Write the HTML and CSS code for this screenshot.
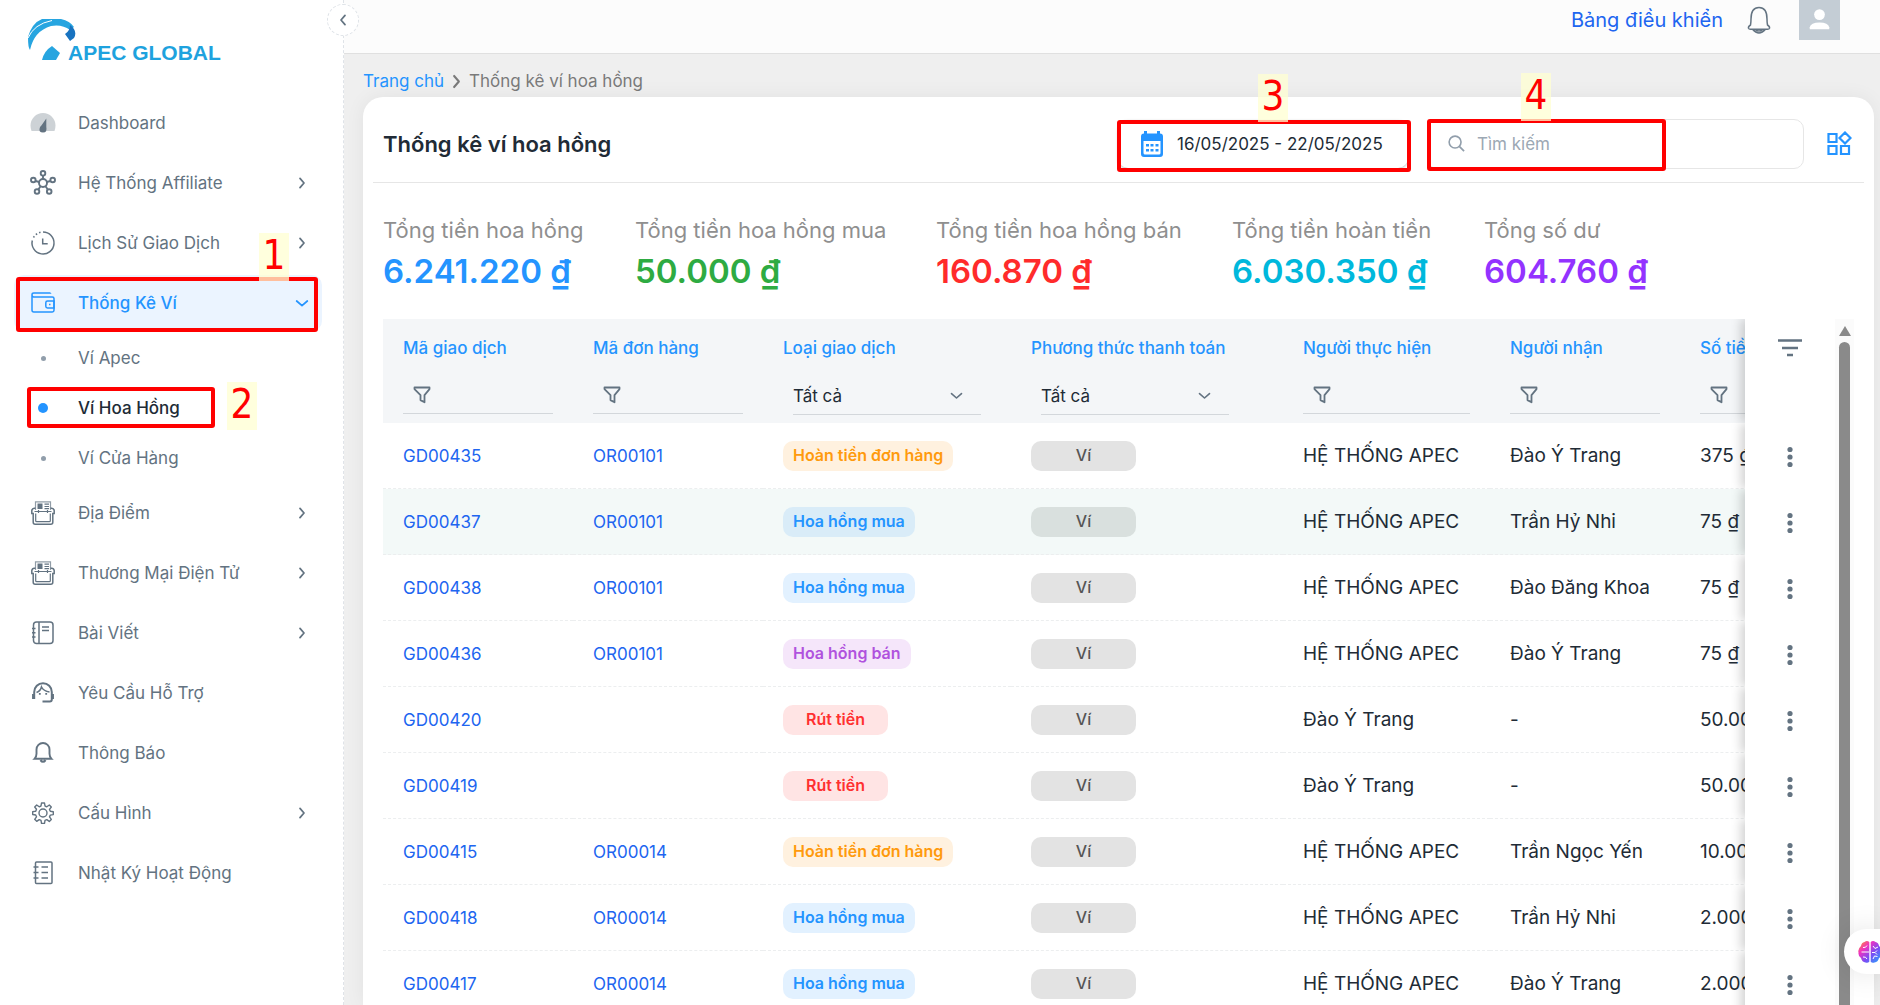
FILE: index.html
```html
<!DOCTYPE html>
<html lang="vi">
<head>
<meta charset="utf-8">
<meta name="viewport" content="width=device-width, initial-scale=1">
<title>Thống kê ví hoa hồng</title>
<link rel="stylesheet" href="styles.css">
</head>
<body>

<!-- shared icons -->
<svg class="sprite" aria-hidden="true">
  <symbol id="i-right" viewBox="0 0 24 24"><path d="M9 5l6 7-6 7" fill="none" stroke="currentColor" stroke-width="2.6" stroke-linecap="round" stroke-linejoin="round"/></symbol>
  <symbol id="i-down" viewBox="0 0 24 24"><path d="M4 9l8 7 8-7" fill="none" stroke="currentColor" stroke-width="2.6" stroke-linecap="round" stroke-linejoin="round"/></symbol>
  <symbol id="i-filter" viewBox="0 0 18 18"><path d="M1.5 1.5h15v1.6l-5 6v7.2l-4-2.2V9.100l-6-6z" fill="none" stroke="currentColor" stroke-width="1.8" stroke-linejoin="round"/></symbol>
  <symbol id="i-dots" viewBox="0 0 6 22"><circle cx="3" cy="3.500" r="2.600"/><circle cx="3" cy="11" r="2.600"/><circle cx="3" cy="18.500" r="2.600"/></symbol>
  <symbol id="i-press" viewBox="0 0 26 26">
    <path d="M5.500 10V1.800h15V10" fill="none" stroke="currentColor" stroke-width="1.200" opacity=".7"/>
    <rect x="7.500" y="3.500" width="5" height="5.500"/><path d="M14.500 4.200h4.500M14.500 6.500h4.500M14.500 8.700h4.500" stroke="currentColor" stroke-width="1.200"/>
    <path d="M5.500 8.200H4.200q-2 0-2.400 2.300v3h1.400v8.700q0 2 2 2h15.600q2 0 2-2v-8.700h1.400v-3q-.4-2.300-2.400-2.300h-1.300" fill="none" stroke="currentColor" stroke-width="1.500"/>
    <path d="M4.500 11.500h17M8.500 10v3M17.500 10v3M5.700 13.500v7.200q0 1 1 1h12.600q1 0 1-1v-7.200" fill="none" stroke="currentColor" stroke-width="1.200"/>
  </symbol>
</svg>

<div class="app">

  <aside class="sidebar">
    <a class="logo" href="#">
      <svg class="logo-mark" viewBox="0 0 48 41" aria-hidden="true">
        <path d="M2 31Q0 29 0 18 4 4 14 0h19q9 2 13 8l-4 3Q34 5 23 7 6 12 2 31z" fill="#27a5e0"/>
        <path d="M0 19Q6 5 24 1.500" fill="none" stroke="#fff" stroke-width="1"/>
        <path d="M42 6q8 6 4 13l-4 3-5-7q5-3 5-9z" fill="#1873c0"/>
        <path d="M14 41q2-9 10-14l8 7-4 7z" fill="#27a5e0"/>
      </svg>
      <span class="logo-text">APEC GLOBAL</span>
    </a>

    <nav class="nav">
      <a class="nav-item" href="#">
        <svg class="nav-icon" viewBox="0 0 26 26"><path d="M.5 15.500a12.500 12.500 0 0 1 25 0q0 3-1 5.500h-23q-1-2.500-1-5.500z" opacity=".32"/><path d="M16.300 8.500v8.500q1.200 5.500-3.300 5.500t-3.300-4.500q.2-1.500 1.700-2.500z"/></svg>
        <span>Dashboard</span>
      </a>
      <a class="nav-item" href="#">
        <svg class="nav-icon line" viewBox="0 0 26 26"><g stroke-width="1.900"><circle cx="13" cy="13" r="4"/><circle cx="13" cy="3.300" r="2.300"/><circle cx="3.300" cy="10" r="2.300"/><circle cx="22.700" cy="10" r="2.300"/><circle cx="7" cy="21.500" r="2.300"/><circle cx="19.200" cy="21.500" r="2.300"/><path d="M13 5.500V9M5.500 11l3.700 1M20.500 11l-3.700 1M8.300 19.500l2.300-3.200M17.800 19.500l-2.300-3.200"/></g></svg>
        <span>Hệ Thống Affiliate</span>
        <svg class="chev"><use href="#i-right"/></svg>
      </a>
      <a class="nav-item" href="#">
        <svg class="nav-icon line" viewBox="0 0 26 26"><path d="M13 2a11 11 0 1 1-10.700 8.500" stroke-width="1.500"/><path d="M3.500 7.500A11 11 0 0 1 11 2.200" stroke-width="1.600" stroke-dasharray="1.500 2.200"/><path d="M12.700 8.500v5.300h5" stroke-width="1.500"/></svg>
        <span>Lịch Sử Giao Dịch</span>
        <svg class="chev"><use href="#i-right"/></svg>
      </a>
      <a class="nav-item active" href="#">
        <svg class="nav-icon line" viewBox="0 0 26 26"><g stroke-width="1.500"><path d="M20.500 3H3.800Q2 3 2 4.700v15.600Q2 22 3.800 22h18.500q1.700 0 1.700-1.700V8.500Q24 7 22.300 7H3.500Q2 6.700 2 5M20.500 3v.8"/><path d="M24 11h-6.500q-1.700 0-1.700 1.700v3.600q0 1.700 1.700 1.700H24z"/><path d="M19 14.500h1.500"/></g></svg>
        <span>Thống Kê Ví</span>
        <svg class="chev"><use href="#i-down"/></svg>
        <span class="mark-box mark-box-1"></span><span class="mark-num mark-num-1">1</span>
      </a>
      <div class="subnav">
        <a class="sub-item" href="#"><i class="dot"></i><span>Ví Apec</span></a>
        <a class="sub-item current" href="#"><i class="dot"></i><span>Ví Hoa Hồng</span>
          <span class="mark-box mark-box-2"></span><span class="mark-num mark-num-2">2</span></a>
        <a class="sub-item" href="#"><i class="dot"></i><span>Ví Cửa Hàng</span></a>
      </div>
      <a class="nav-item" href="#">
        <svg class="nav-icon"><use href="#i-press"/></svg>
        <span>Địa Điểm</span>
        <svg class="chev"><use href="#i-right"/></svg>
      </a>
      <a class="nav-item" href="#">
        <svg class="nav-icon"><use href="#i-press"/></svg>
        <span>Thương Mại Điện Tử</span>
        <svg class="chev"><use href="#i-right"/></svg>
      </a>
      <a class="nav-item" href="#">
        <svg class="nav-icon line" viewBox="0 0 26 26"><g stroke-width="1.500"><rect x="3.500" y="2" width="19.500" height="21.500" rx="3"/><path d="M9 2v21.500M2 8.500h3.500M2 12.800h3.500M2 17h3.500M12 7h7M12 10.500h7"/></g></svg>
        <span>Bài Viết</span>
        <svg class="chev"><use href="#i-right"/></svg>
      </a>
      <a class="nav-item" href="#">
        <svg class="nav-icon line" viewBox="0 0 26 26"><path d="M4.200 19V12a8.800 8.800 0 0 1 17.600 0v7.500q0 2-2 2H12.500" stroke-width="2"/><path d="M3.300 14v5M22.700 14v5" stroke-width="2.500"/><path d="M6.500 12.500q4-1.500 5-5.500 2 4 8 5" stroke-width="1.600"/><path d="M9.800 13v1.800M16.200 13v1.800" stroke-width="1.800"/></svg>
        <span>Yêu Cầu Hỗ Trợ</span>
      </a>
      <a class="nav-item" href="#">
        <svg class="nav-icon line" viewBox="0 0 26 26"><path d="M4.500 18.800q2-2 2-5V9.500a6.500 6.500 0 0 1 13 0v4.300q0 3 2 5z" stroke-width="1.900"/><path d="M10.500 20q2.500 3.500 5 0" stroke-width="2.200"/></svg>
        <span>Thông Báo</span>
      </a>
      <a class="nav-item" href="#">
        <svg class="nav-icon line" viewBox="0 0 26 26"><g stroke-width="1.400"><circle cx="13" cy="13" r="4"/><path d="M11.500 3h3l.5 3 1.800.8L19.300 5 21.300 7l-1.800 2.400.8 1.900 3 .4v2.900l-3 .5-.8 1.800 1.800 2.500-2 2-2.500-1.800-1.800.8-.5 3h-3l-.5-3-1.800-.8L6.700 21.300l-2-2 1.800-2.500-.8-1.800-3-.5v-2.900l3-.4.8-1.900L4.700 7l2-2 2.500 1.800L11 6z" stroke-linejoin="round"/></g></svg>
        <span>Cấu Hình</span>
        <svg class="chev"><use href="#i-right"/></svg>
      </a>
      <a class="nav-item" href="#">
        <svg class="nav-icon line" viewBox="0 0 26 26"><g stroke-width="1.500"><rect x="5.500" y="2" width="16.500" height="21.500" rx="1"/><path d="M3.500 7h5M3.500 12.500h5M3.500 18h5M11.500 7h6.500M11.500 12.500h6.500M11.500 18h6.500"/></g></svg>
        <span>Nhật Ký Hoạt Động</span>
      </a>
    </nav>
    <button class="collapse" type="button" aria-label="Thu gọn"><svg class="flip"><use href="#i-right"/></svg></button>
  </aside>

  <main class="main">
    <header class="topbar">
      <a class="top-link" href="#">Bảng điều khiển</a>
      <button class="bell" type="button" aria-label="Thông báo">
        <svg viewBox="0 0 24 28"><path d="M3.500 19q.5-2.500.5-6Q4 1.500 12 1.500T20 13q0 3.500.5 6 2.500 1.500 2 3.300-.4 1-2 1H3.500q-1.600 0-2-1Q1 20.500 3.500 19zM5.500 23.300q6.500 7.500 13 0M8 23.500q4 3 8 0" fill="none" stroke="currentColor" stroke-width="1.500"/></svg>
      </button>
      <button class="avatar" type="button" aria-label="Tài khoản">
        <svg viewBox="0 0 42 42"><rect width="42" height="42" fill="#c4cdd5"/><circle cx="21" cy="16" r="5.500" fill="#fff"/><path d="M11 31v-2q1-5 10-5t10 5v2z" fill="#fff"/></svg>
      </button>
    </header>

    <nav class="crumbs">
      <a href="#">Trang chủ</a>
      <svg><use href="#i-right"/></svg>
      <span>Thống kê ví hoa hồng</span>
    </nav>

    <section class="card">
      <div class="card-head">
        <h1>Thống kê ví hoa hồng</h1>
        <div class="date-wrap">
          <button class="date" type="button">
            <svg viewBox="0 0 24 26"><path d="M4 0h3v2.500h10V0h3v2.500q3 0 3 3V23q0 3-3 3H4q-3 0-3-3V5.500q0-3 3-3zM3.500 10v12q0 1.500 1.500 1.500h14q1.500 0 1.500-1.500V10z" fill-rule="evenodd"/><path d="M6 13h3v2.500H6zM10.500 13h3v2.500h-3zM15.500 13h3v2.500h-3zM6 18h3v2.500H6zM10.500 18h3v2.500h-3zM15.500 18h3v2.500h-3z"/></svg>
            16/05/2025 - 22/05/2025
          </button>
          <span class="mark-box mark-box-3"></span><span class="mark-num mark-num-3">3</span>
        </div>
        <label class="search">
          <svg viewBox="0 0 18 18"><circle cx="7.500" cy="7.500" r="6.300" fill="none" stroke="currentColor" stroke-width="1.700"/><path d="M12 12l5 5" stroke="currentColor" stroke-width="1.900"/></svg>
          <input type="search" placeholder="Tìm kiếm" aria-label="Tìm kiếm">
          <span class="mark-box mark-box-4"></span><span class="mark-num mark-num-4">4</span>
        </label>
        <button class="widgets" type="button" aria-label="Tùy chỉnh">
          <svg viewBox="0 0 25 25"><path d="M1.500 3h8v8h-8zM1.500 15h8v8h-8zM14 15h8v8h-8zM18 1.500L23.500 7 18 12.500 12.500 7z" fill="none" stroke="currentColor" stroke-width="2.200"/></svg>
        </button>
      </div>

      <dl class="stats">
        <div><dt>Tổng tiền hoa hồng</dt><dd class="blue">6.241.220 ₫</dd></div>
        <div><dt>Tổng tiền hoa hồng mua</dt><dd class="green">50.000 ₫</dd></div>
        <div><dt>Tổng tiền hoa hồng bán</dt><dd class="red">160.870 ₫</dd></div>
        <div><dt>Tổng tiền hoàn tiền</dt><dd class="cyan">6.030.350 ₫</dd></div>
        <div><dt>Tổng số dư</dt><dd class="purple">604.760 ₫</dd></div>
      </dl>

      <div class="grid-area">
        <div class="table-wrap">
          <table>
            <colgroup><col class="c-code"><col class="c-code"><col class="c-type"><col class="c-pay"><col class="c-from"><col class="c-to"><col class="c-sum"><col class="c-act"></colgroup>
            <thead>
              <tr class="titles">
                <th>Mã giao dịch</th><th>Mã đơn hàng</th><th>Loại giao dịch</th><th>Phương thức thanh toán</th><th>Người thực hiện</th><th>Người nhận</th><th>Số tiền</th>
                <th class="act" rowspan="2"><button type="button" aria-label="Bộ lọc"><svg class="lines" viewBox="0 0 24 18"><path d="M0 1.500h24M4 9h16M9 16h6" stroke="currentColor" stroke-width="2.600"/></svg></button></th>
              </tr>
              <tr class="filters">
                <td><label class="filter"><svg><use href="#i-filter"/></svg><input type="text" aria-label="Lọc mã giao dịch"></label></td>
                <td><label class="filter"><svg><use href="#i-filter"/></svg><input type="text" aria-label="Lọc mã đơn hàng"></label></td>
                <td><div class="pick"><select aria-label="Loại giao dịch"><option>Tất cả</option></select><svg><use href="#i-down"/></svg></div></td>
                <td><div class="pick"><select aria-label="Phương thức thanh toán"><option>Tất cả</option></select><svg><use href="#i-down"/></svg></div></td>
                <td><label class="filter"><svg><use href="#i-filter"/></svg><input type="text" aria-label="Lọc người thực hiện"></label></td>
                <td><label class="filter"><svg><use href="#i-filter"/></svg><input type="text" aria-label="Lọc người nhận"></label></td>
                <td><label class="filter"><svg><use href="#i-filter"/></svg><input type="text" aria-label="Lọc số tiền"></label></td>
              </tr>
            </thead>
            <tbody>
              <tr><td><a href="#">GD00435</a></td><td><a href="#">OR00101</a></td><td><span class="tag refund">Hoàn tiền đơn hàng</span></td><td><span class="tag wallet">Ví</span></td><td>HỆ THỐNG APEC</td><td>Đào Ý Trang</td><td>375 ₫</td><td class="act"><button type="button" aria-label="Thao tác"><svg class="dots"><use href="#i-dots"/></svg></button></td></tr>
              <tr class="hover"><td><a href="#">GD00437</a></td><td><a href="#">OR00101</a></td><td><span class="tag buy">Hoa hồng mua</span></td><td><span class="tag wallet">Ví</span></td><td>HỆ THỐNG APEC</td><td>Trần Hỷ Nhi</td><td>75 ₫</td><td class="act"><button type="button" aria-label="Thao tác"><svg class="dots"><use href="#i-dots"/></svg></button></td></tr>
              <tr><td><a href="#">GD00438</a></td><td><a href="#">OR00101</a></td><td><span class="tag buy">Hoa hồng mua</span></td><td><span class="tag wallet">Ví</span></td><td>HỆ THỐNG APEC</td><td>Đào Đăng Khoa</td><td>75 ₫</td><td class="act"><button type="button" aria-label="Thao tác"><svg class="dots"><use href="#i-dots"/></svg></button></td></tr>
              <tr><td><a href="#">GD00436</a></td><td><a href="#">OR00101</a></td><td><span class="tag sell">Hoa hồng bán</span></td><td><span class="tag wallet">Ví</span></td><td>HỆ THỐNG APEC</td><td>Đào Ý Trang</td><td>75 ₫</td><td class="act"><button type="button" aria-label="Thao tác"><svg class="dots"><use href="#i-dots"/></svg></button></td></tr>
              <tr><td><a href="#">GD00420</a></td><td></td><td><span class="tag draw">Rút tiền</span></td><td><span class="tag wallet">Ví</span></td><td>Đào Ý Trang</td><td>-</td><td>50.000 ₫</td><td class="act"><button type="button" aria-label="Thao tác"><svg class="dots"><use href="#i-dots"/></svg></button></td></tr>
              <tr><td><a href="#">GD00419</a></td><td></td><td><span class="tag draw">Rút tiền</span></td><td><span class="tag wallet">Ví</span></td><td>Đào Ý Trang</td><td>-</td><td>50.000 ₫</td><td class="act"><button type="button" aria-label="Thao tác"><svg class="dots"><use href="#i-dots"/></svg></button></td></tr>
              <tr><td><a href="#">GD00415</a></td><td><a href="#">OR00014</a></td><td><span class="tag refund">Hoàn tiền đơn hàng</span></td><td><span class="tag wallet">Ví</span></td><td>HỆ THỐNG APEC</td><td>Trần Ngọc Yến</td><td>10.000 ₫</td><td class="act"><button type="button" aria-label="Thao tác"><svg class="dots"><use href="#i-dots"/></svg></button></td></tr>
              <tr><td><a href="#">GD00418</a></td><td><a href="#">OR00014</a></td><td><span class="tag buy">Hoa hồng mua</span></td><td><span class="tag wallet">Ví</span></td><td>HỆ THỐNG APEC</td><td>Trần Hỷ Nhi</td><td>2.000 ₫</td><td class="act"><button type="button" aria-label="Thao tác"><svg class="dots"><use href="#i-dots"/></svg></button></td></tr>
              <tr><td><a href="#">GD00417</a></td><td><a href="#">OR00014</a></td><td><span class="tag buy">Hoa hồng mua</span></td><td><span class="tag wallet">Ví</span></td><td>HỆ THỐNG APEC</td><td>Đào Ý Trang</td><td>2.000 ₫</td><td class="act"><button type="button" aria-label="Thao tác"><svg class="dots"><use href="#i-dots"/></svg></button></td></tr>
            </tbody>
          </table>
        </div>
        <div class="scrollbar"><i class="arrow"></i><i class="thumb"></i></div>
      </div>
    </section>
  </main>

  <button class="assistant" type="button" aria-label="Trợ lý">
    <svg viewBox="0 0 24 24">
      <defs><linearGradient id="brain" x1="0" y1="0" x2="1" y2="1"><stop offset="0" stop-color="#ff9a1f"/><stop offset=".3" stop-color="#f032c0"/><stop offset=".6" stop-color="#7a4df5"/><stop offset="1" stop-color="#1fb0ff"/></linearGradient></defs>
      <path d="M11.300 2Q9 0 6.500 2 3.500 2.500 3 6-.5 9 .5 12.500 0 16 3 18q1 4 4.500 4.500 2.300 1 3.800-.8zM12.700 2Q15 0 17.500 2q3 .5 3.500 4 3.500 3 2.500 6.500.5 3.500-2.500 5.500-1 4-4.500 4.500-2.300 1-3.800-.8z" fill="url(#brain)"/>
      <path d="M3.500 12H11M5 7.500q3 .5 4-2M5 17q3-.5 4 2M15 6l2 2.500L20 7M14 12.500h3l2-2M17 12.500l2 2M15 19l1.500-3 3 .5" fill="none" stroke="#fff" stroke-width="1"/>
    </svg>
  </button>
</div>
</body>
</html>
```
FILE: styles.css
```css
* {
  box-sizing: border-box;
}
html, body {
  height: 100%;
}
body {
  margin: 0;
  background: #efefef;
  color: #212b36;
  font-family: Inter, "Noto Sans", sans-serif;
  font-size: 17px;
  line-height: 24px;
  overflow: hidden;
}
a {
  color: #2065f0;
  text-decoration: none;
}
button {
  margin: 0;
  padding: 0;
  border: 0;
  background: none;
  color: inherit;
  font: inherit;
}
svg {
  display: block;
  fill: currentColor;
}
.sprite {
  position: absolute;
  width: 0;
  height: 0;
}
.app {
  display: flex;
  height: 100%;
}

/* sidebar */
.sidebar {
  position: relative;
  flex: none;
  width: 344px;
  padding: 19px 21px 0 14px;
  background: #fff;
  border-right: 1px dashed #dfe3e8;
  z-index: 2;
}
.logo {
  display: flex;
  align-items: flex-end;
  height: 41px;
  margin-bottom: 33px;
  padding-left: 14px;
}
.logo-mark {
  width: 48px;
  height: 41px;
}
.logo-text {
  margin-left: -8px;
  color: #1ea2de;
  font: bold 21px/15px "Liberation Sans", Arial, sans-serif;
}
.nav {
  display: flex;
  flex-direction: column;
}
.nav-item,
.sub-item {
  position: relative;
  display: flex;
  align-items: center;
  gap: 22px;
  color: #637381;
}
.nav-item {
  height: 56px;
  margin: 2px 0;
  padding: 0 12px 0 16px;
  border-radius: 10px;
}
.nav-icon {
  flex: none;
  width: 26px;
  height: 26px;
}
.line {
  fill: none;
  stroke: currentColor;
}
.chev {
  width: 16px;
  height: 16px;
  margin-left: auto;
}
.nav-item.active {
  background: #ebf4ff;
  color: #2494ff;
  font-weight: 500;
}
.sub-item {
  height: 50px;
  padding-left: 16px;
}
.dot {
  width: 5px;
  height: 5px;
  margin: 0 10px 0 11px;
  border-radius: 50%;
  background: #919eab;
}
.current {
  color: #212b36;
  font-weight: 500;
}
.current .dot {
  width: 10px;
  height: 10px;
  margin: 0 8px;
  background: #2494ff;
}
.collapse {
  position: absolute;
  top: 4px;
  right: -16px;
  display: grid;
  place-items: center;
  width: 32px;
  height: 32px;
  border: 1px dashed #dfe3e8;
  border-radius: 50%;
  background: #fff;
  color: #637381;
}
.collapse svg {
  width: 16px;
  height: 16px;
}
.flip {
  transform: rotate(180deg);
}

/* main column */
.main {
  display: flex;
  flex: 1;
  flex-direction: column;
  min-width: 0;
}
.topbar {
  display: flex;
  flex: none;
  align-items: center;
  justify-content: flex-end;
  gap: 24px;
  height: 54px;
  padding: 0 40px 14px 0;
  background: #fcfcfc;
  border-bottom: 1px solid #e0e0e0;
}
.top-link {
  font-size: 20px;
}
.bell {
  color: #637381;
}
.bell svg {
  width: 24px;
  height: 28px;
}
.avatar {
  margin-left: 4px;
}
.avatar svg {
  width: 41px;
  height: 41px;
}
.crumbs {
  display: flex;
  align-items: center;
  gap: 3px;
  padding: 15px 19px 4px;
  color: #7a7a7a;
}
.crumbs a {
  color: #2494ff;
}
.crumbs svg {
  width: 19px;
  height: 19px;
}

/* card */
.card {
  display: flex;
  flex: 1;
  flex-direction: column;
  min-height: 0;
  margin: 0 6px 0 19px;
  padding: 0 10px;
  border-radius: 20px 20px 0 0;
  background: #fff;
  box-shadow: 0 0 20px rgba(0, 0, 0, .06);
}
.card-head {
  display: flex;
  align-items: center;
  height: 86px;
  padding: 8px 12px 0 10px;
  border-bottom: 1px solid #e6e6e6;
}
.card-head h1 {
  margin: 0 auto 0 0;
  font-size: 22px;
  font-weight: 600;
}
.date-wrap {
  position: relative;
}
.date {
  display: flex;
  align-items: center;
  gap: 13px;
  width: 290px;
  height: 48px;
  padding-left: 22px;
  border-radius: 10px;
  box-shadow: 0 1px 3px rgba(0, 0, 0, .25);
}
.date svg {
  width: 24px;
  height: 26px;
  color: #2494ff;
}
.search {
  position: relative;
  display: flex;
  align-items: center;
  gap: 12px;
  width: 377px;
  height: 50px;
  margin: 0 23px 0 19px;
  padding: 0 20px;
  border: 1px solid #e6e6e6;
  border-radius: 10px;
  color: #919eab;
}
.search svg {
  flex: none;
  width: 17px;
  height: 17px;
}
.search input {
  flex: 1;
  min-width: 0;
  padding: 0;
  border: 0;
  background: none;
  font: inherit;
}
.search input::placeholder {
  color: #9ca8b4;
}
.widgets {
  color: #2494ff;
}
.widgets svg {
  width: 25px;
  height: 25px;
}

.stats {
  display: grid;
  grid-template-columns: 252px 301px 296px 252px auto;
  margin: 0;
  padding: 33px 10px 26px;
}
.stats dt {
  color: #8f8f8f;
  font-size: 22px;
  line-height: 28px;
  white-space: nowrap;
}
.stats dd {
  margin: 0;
  padding-top: 5px;
  font-size: 33px;
  font-weight: 600;
  line-height: 44px;
  white-space: nowrap;
}
.blue { color: #2494ff; }
.green { color: #2eab42; }
.red { color: #ff2b2b; }
.cyan { color: #00b8dc; }
.purple { color: #9333ff; }

/* table */
.grid-area {
  display: flex;
  flex: 1;
  min-height: 0;
  padding: 0 10px;
}
.table-wrap {
  flex: 1;
  min-width: 0;
  overflow: hidden;
}
table {
  width: 1587px;
  border-spacing: 0;
  table-layout: fixed;
}
.c-code { width: 190px; }
.c-type { width: 248px; }
.c-pay { width: 272px; }
.c-from { width: 207px; }
.c-to { width: 190px; }
.c-sum { width: 200px; }
.c-act { width: 90px; }
th, td {
  padding: 0 20px;
  text-align: left;
  white-space: nowrap;
}
thead th, thead td {
  background: #f4f6f8;
  color: #2494ff;
  font-size: 17px;
  font-weight: 500;
}
.titles {
  height: 58px;
}
.filters {
  height: 46px;
}
.filters td {
  vertical-align: top;
}
.filter {
  display: flex;
  align-items: center;
  gap: 8px;
  height: 37px;
  padding-left: 10px;
  border-bottom: 1px solid #d3d7db;
  color: #637381;
}
.filter svg {
  flex: none;
  width: 18px;
  height: 18px;
}
.filter input {
  flex: 1;
  min-width: 0;
  border: 0;
  background: none;
  font: inherit;
}
.pick {
  display: flex;
  align-items: center;
  width: 188px;
  height: 38px;
  margin-left: 10px;
  padding-right: 17px;
  border-bottom: 1px solid #d3d7db;
  color: #637381;
}
.pick select {
  flex: 1;
  padding: 0;
  border: 0;
  appearance: none;
  background: none;
  color: #212b36;
  font: 400 17px/24px Inter, "Noto Sans", sans-serif;
}
.pick svg {
  width: 15px;
  height: 15px;
}
tbody td {
  height: 66px;
  border-bottom: 1px dashed #eceeef;
  font-size: 19px;
}
tbody td a {
  font-size: 17px;
}
.hover td {
  background: #f3f9f8;
}
.tag {
  display: inline-block;
  min-width: 105px;
  height: 30px;
  padding: 0 10px;
  border-radius: 10px;
  font-size: 16px;
  font-weight: 600;
  line-height: 29px;
  text-align: center;
  vertical-align: middle;
}
.refund { background: #fff1df; color: #ff9a0d; }
.buy { background: #e2f1ff; color: #2494ff; }
.sell { background: #f5e6fa; color: #b052de; }
.draw { background: #ffe4e4; color: #ff3030; }
.wallet { background: #e3e3e3; color: #555; font-weight: 500; }
.hover .buy { background: #d9ecf8; }
.hover .wallet { background: #d9e0de; }

/* pinned actions column */
table .act {
  position: sticky;
  right: 0;
  padding: 0;
  border: 0;
  background: #fff;
  box-shadow: -4px 0 10px rgba(0, 0, 0, .18);
  color: #637381;
  clip-path: inset(0 0 0 -16px);
  text-align: center;
}
th.act {
  vertical-align: top;
}
.act button {
  display: inline-block;
  vertical-align: middle;
}
th.act button {
  margin-top: 20px;
}
.dots {
  width: 6px;
  height: 22px;
}
.lines {
  width: 24px;
  height: 18px;
}
.scrollbar {
  display: flex;
  flex-direction: column;
  align-items: center;
  width: 19px;
  padding-top: 7px;
  background: #fbfbfb;
}
.arrow {
  border: 6px solid transparent;
  border-top: 0;
  border-bottom: 10px solid #8a8a8a;
}
.thumb {
  flex: 1;
  width: 11px;
  margin-top: 6px;
  border-radius: 6px 6px 0 0;
  background: #8a8a8a;
}

/* floating assistant */
.assistant {
  position: fixed;
  right: 0;
  bottom: 31px;
  width: 36px;
  height: 45px;
  padding-left: 14px;
  overflow: hidden;
  border-radius: 23px 0 0 23px;
  background: #fff;
  box-shadow: 0 0 30px rgba(0, 0, 0, .12);
  z-index: 3;
}
.assistant svg {
  width: 24px;
  height: 24px;
}

/* numbered callouts */
.mark-box {
  position: absolute;
  border: 4px solid #f00;
  border-radius: 3px;
  pointer-events: none;
}
.mark-num {
  position: absolute;
  width: 30px;
  height: 48px;
  background: rgba(255, 255, 210, .75);
  color: #f00;
  font: 40px/44px "DejaVu Sans Condensed", "DejaVu Sans", sans-serif;
  text-align: center;
  pointer-events: none;
}
.mark-box-1 { inset: 2px 4px -1px 2px; }
.mark-num-1 { right: 33px; bottom: 50px; }
.mark-box-2 { top: 4px; left: 13px; width: 188px; height: 41px; }
.mark-num-2 { top: -1px; left: 213px; }
.mark-box-3 { inset: 0 -3px -4px -1px; }
.mark-num-3 { left: 140px; bottom: 46px; }
.mark-box-4 { top: -1px; left: -1px; width: 239px; height: 52px; }
.mark-num-4 { left: 93px; bottom: 47px; }
```
